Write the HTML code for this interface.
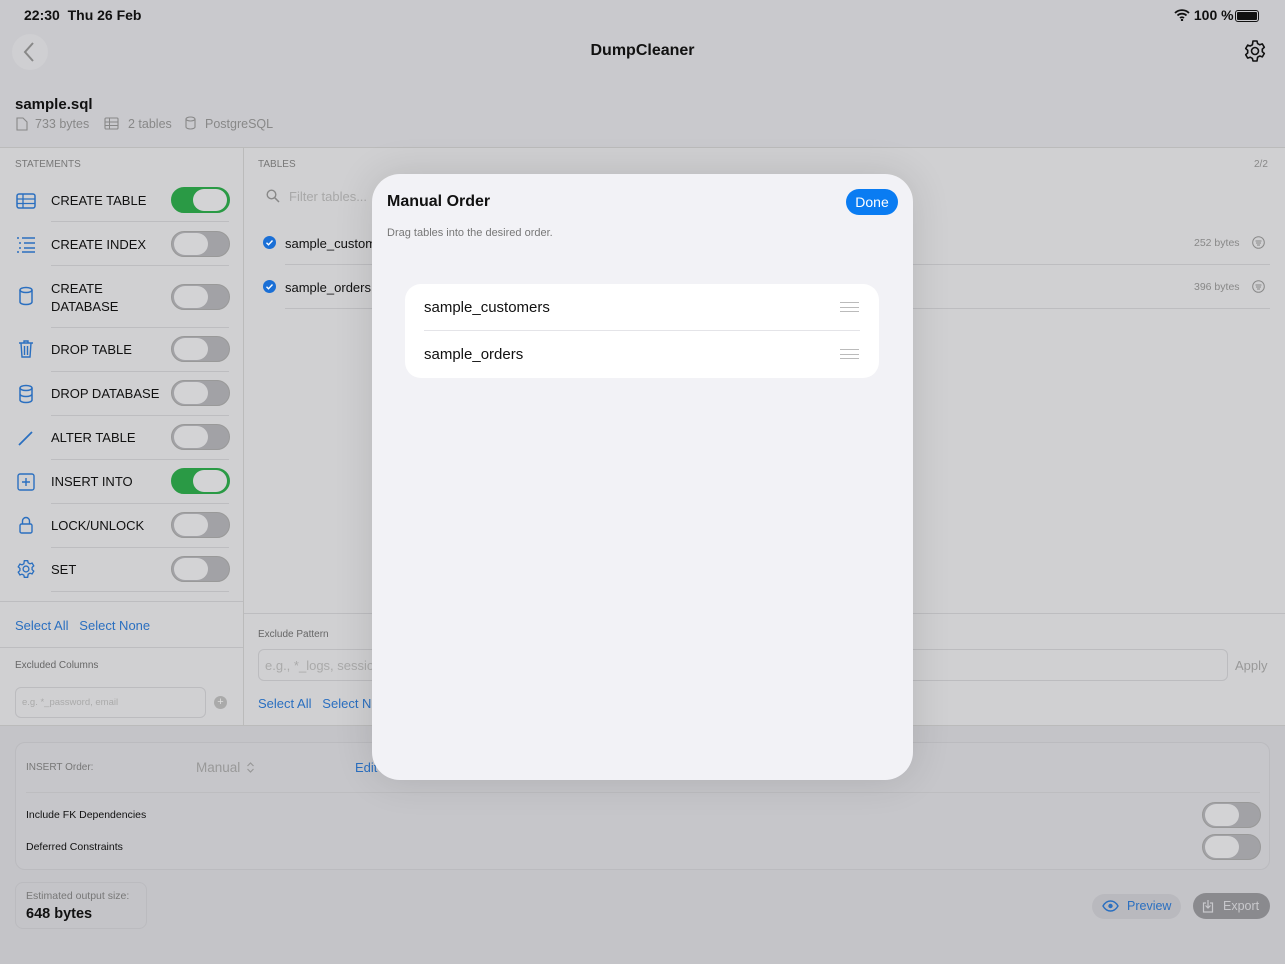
<!DOCTYPE html>
<html><head><meta charset="utf-8"><style>
*{box-sizing:border-box;margin:0;padding:0}
body{width:1285px;height:964px;overflow:hidden;background:#c4c4c8;font-family:"Liberation Sans",sans-serif;color:#111;position:relative}
.a{position:absolute}
.t{position:absolute;white-space:nowrap}
.blue{color:#2a6fc0}
.gray{color:#888}
.tog{position:absolute;width:59px;height:26px;border-radius:13px;background:#a2a2a6;border:1px solid #999}
.tog::after{content:"";position:absolute;left:2px;top:1px;width:34px;height:22px;border-radius:11px;background:#d3d3d5}
.tog.on{background:#2a9a45;border-color:#2a9a45}
.tog.on::after{left:21px}
.sep{position:absolute;height:1px;background:#bdbdc0}
.ic{position:absolute;left:16px;width:20px;height:20px}
.lbl{position:absolute;white-space:nowrap;left:51px;font-size:13px}
.chk{position:absolute;width:13px;height:13px}
</style></head><body>
<div class="a" style="left:0;top:0;width:1285px;height:147px;background:#c9c9cd"></div>
<div class="t" style="left:24px;top:7px;font-size:14px;font-weight:bold">22:30&nbsp; Thu 26 Feb</div>
<div class="t" style="left:1174px;top:7px;font-size:14px;font-weight:bold">
<svg width="16" height="12" viewBox="0 0 16 12" style="vertical-align:-1px"><path d="M1 4a10 10 0 0 1 14 0M3.5 6.5a6.5 6.5 0 0 1 9 0M6 9a3 3 0 0 1 4 0" stroke="#111" stroke-width="1.8" fill="none"/><circle cx="8" cy="11" r="1.2" fill="#111"/></svg> 100 %</div>
<div class="a" style="left:1235px;top:10px;width:24px;height:12px;border:1.5px solid #111;border-radius:3px;padding:1px"><div style="width:100%;height:100%;background:#111;border-radius:1px"></div></div>
<div class="a" style="left:12px;top:34px;width:36px;height:36px;border-radius:18px;background:#cfcfd2"></div>
<svg class="a" style="left:22px;top:41px" width="14" height="22"><path d="M11 2L3 11l8 9" stroke="#888" stroke-width="2" fill="none"/></svg>
<div class="t" style="left:0;width:1285px;text-align:center;top:42px;font-size:16px;font-weight:bold">DumpCleaner</div>
<svg class="a" style="left:1243px;top:39px" width="24" height="24" viewBox="0 0 24 24"><circle cx="12" cy="12" r="3.5" stroke="#111" stroke-width="1.6" fill="none"/><path d="M10 2h4l.6 2.6 2.2 1.2 2.5-.9 2 3.4-2 1.8v2.6l2 1.8-2 3.4-2.5-.9-2.2 1.2L14 22h-4l-.6-2.6-2.2-1.2-2.5.9-2-3.4 2-1.8V11.3l-2-1.8 2-3.4 2.5.9 2.2-1.2z" stroke="#111" stroke-width="1.6" fill="none" stroke-linejoin="round"/></svg>
<div class="t" style="left:15px;top:96px;font-size:15px;font-weight:bold">sample.sql</div>
<svg class="a" style="left:16px;top:117px" width="12" height="14" viewBox="0 0 12 14"><path d="M1 1h6l4 4v8H1z" stroke="#888" stroke-width="1.1" fill="none"/></svg>
<div class="t gray" style="left:35px;top:117px;font-size:12.5px">733 bytes</div>
<svg class="a" style="left:104px;top:117px" width="15" height="13" viewBox="0 0 15 13"><rect x="1" y="1" width="13" height="11" rx="1" stroke="#888" stroke-width="1.1" fill="none"/><path d="M1 5h13M1 8.5h13M5.5 1v11" stroke="#888" stroke-width="1"/></svg>
<div class="t gray" style="left:128px;top:117px;font-size:12.5px">2 tables</div>
<svg class="a" style="left:185px;top:116px" width="11" height="14" viewBox="0 0 11 14"><ellipse cx="5.5" cy="3" rx="4.5" ry="2" stroke="#888" stroke-width="1.1" fill="none"/><path d="M1 3v8c0 1.1 2 2 4.5 2s4.5-.9 4.5-2V3" stroke="#888" stroke-width="1.1" fill="none"/></svg>
<div class="t gray" style="left:205px;top:117px;font-size:12.5px">PostgreSQL</div>

<div class="a" style="left:0;top:147px;width:1285px;height:579px;background:#d0d0d2;border-top:1px solid #bbb;border-bottom:1px solid #bbb"></div>
<div class="a" style="left:243px;top:147px;width:1px;height:579px;background:#bbb"></div>
<div class="t" style="left:15px;top:159px;font-size:10px;color:#777">STATEMENTS</div>
<div class="t" style="left:258px;top:159px;font-size:10px;color:#777">TABLES</div>
<div class="t gray" style="left:1254px;top:159px;font-size:10px">2/2</div>

<svg class="ic" style="top:191px" viewBox="0 0 20 20"><rect x="1" y="3" width="18" height="14" rx="2" stroke="#2a6fc0" stroke-width="1.5" fill="none"/><path d="M1 8h18M1 12.5h18M7 3v14" stroke="#2a6fc0" stroke-width="1.3"/></svg>
<div class="lbl" style="top:193px">CREATE TABLE</div><div class="tog on" style="left:171px;top:187px"></div>
<div class="sep" style="left:51px;top:221px;width:178px"></div>
<svg class="ic" style="top:234px" viewBox="0 0 20 20"><path d="M6 4h13M8 9h11M8 14h11M6 18h13" stroke="#2a6fc0" stroke-width="1.4"/><path d="M1 4h2M3 9h2M3 14h2M1 18h2" stroke="#2a6fc0" stroke-width="1.4"/></svg>
<div class="lbl" style="top:237px">CREATE INDEX</div><div class="tog" style="left:171px;top:231px"></div>
<div class="sep" style="left:51px;top:265px;width:178px"></div>
<svg class="ic" style="top:286px" viewBox="0 0 20 20"><ellipse cx="10" cy="4" rx="6" ry="2.5" stroke="#2a6fc0" stroke-width="1.5" fill="none"/><path d="M4 4v12c0 1.4 2.7 2.5 6 2.5s6-1.1 6-2.5V4" stroke="#2a6fc0" stroke-width="1.5" fill="none"/></svg>
<div class="lbl" style="top:280px;line-height:18px">CREATE<br>DATABASE</div><div class="tog" style="left:171px;top:284px"></div>
<div class="sep" style="left:51px;top:327px;width:178px"></div>
<svg class="ic" style="top:339px" viewBox="0 0 20 20"><path d="M3 4h14M8 4V2h4v2M5 4l1 14h8l1-14M8.5 7v9M11.5 7v9" stroke="#2a6fc0" stroke-width="1.4" fill="none"/></svg>
<div class="lbl" style="top:342px">DROP TABLE</div><div class="tog" style="left:171px;top:336px"></div>
<div class="sep" style="left:51px;top:371px;width:178px"></div>
<svg class="ic" style="top:384px" viewBox="0 0 20 20"><ellipse cx="10" cy="4" rx="6" ry="2.5" stroke="#2a6fc0" stroke-width="1.5" fill="none"/><path d="M4 4v12c0 1.4 2.7 2.5 6 2.5s6-1.1 6-2.5V4M4 10c0 1.4 2.7 2.5 6 2.5s6-1.1 6-2.5" stroke="#2a6fc0" stroke-width="1.5" fill="none"/></svg>
<div class="lbl" style="top:386px">DROP DATABASE</div><div class="tog" style="left:171px;top:380px"></div>
<div class="sep" style="left:51px;top:415px;width:178px"></div>
<svg class="ic" style="top:428px" viewBox="0 0 20 20"><path d="M3 17L16 4" stroke="#2a6fc0" stroke-width="1.8"/></svg>
<div class="lbl" style="top:430px">ALTER TABLE</div><div class="tog" style="left:171px;top:424px"></div>
<div class="sep" style="left:51px;top:459px;width:178px"></div>
<svg class="ic" style="top:472px" viewBox="0 0 20 20"><rect x="2" y="2" width="16" height="16" rx="2" stroke="#2a6fc0" stroke-width="1.4" fill="none"/><path d="M10 6v8M6 10h8" stroke="#2a6fc0" stroke-width="1.4"/></svg>
<div class="lbl" style="top:474px">INSERT INTO</div><div class="tog on" style="left:171px;top:468px"></div>
<div class="sep" style="left:51px;top:503px;width:178px"></div>
<svg class="ic" style="top:515px" viewBox="0 0 20 20"><rect x="4" y="9" width="12" height="9" rx="1.5" stroke="#2a6fc0" stroke-width="1.4" fill="none"/><path d="M6.5 9V6a3.5 3.5 0 0 1 7 0v3" stroke="#2a6fc0" stroke-width="1.4" fill="none"/></svg>
<div class="lbl" style="top:518px">LOCK/UNLOCK</div><div class="tog" style="left:171px;top:512px"></div>
<div class="sep" style="left:51px;top:547px;width:178px"></div>
<svg class="ic" style="top:559px" viewBox="0 0 24 24"><circle cx="12" cy="12" r="3.5" stroke="#2a6fc0" stroke-width="1.6" fill="none"/><path d="M10 2h4l.6 2.6 2.2 1.2 2.5-.9 2 3.4-2 1.8v2.6l2 1.8-2 3.4-2.5-.9-2.2 1.2L14 22h-4l-.6-2.6-2.2-1.2-2.5.9-2-3.4 2-1.8V11.3l-2-1.8 2-3.4 2.5.9 2.2-1.2z" stroke="#2a6fc0" stroke-width="1.6" fill="none"/></svg>
<div class="lbl" style="top:562px">SET</div><div class="tog" style="left:171px;top:556px"></div>
<div class="sep" style="left:51px;top:591px;width:178px"></div>
<div class="sep" style="left:0;top:601px;width:243px"></div>
<div class="t blue" style="left:15px;top:618px;font-size:13px">Select All&nbsp;&nbsp; Select None</div>
<div class="sep" style="left:0;top:647px;width:243px"></div>
<div class="t" style="left:15px;top:660px;font-size:10px;color:#666">Excluded Columns</div>
<div class="a" style="left:15px;top:687px;width:191px;height:31px;border:1px solid #bcbcbf;border-radius:6px"></div>
<div class="t" style="left:22px;top:697px;font-size:9.5px;color:#aaa">e.g. *_password, email</div>
<div class="a" style="left:214px;top:696px;width:13px;height:13px;border-radius:7px;background:#aaa;color:#ddd;font-size:11px;line-height:13px;text-align:center">+</div>

<svg class="a" style="left:266px;top:189px" width="14" height="14" viewBox="0 0 14 14"><circle cx="5.5" cy="5.5" r="4.3" stroke="#888" stroke-width="1.4" fill="none"/><path d="M8.7 8.7L13 13" stroke="#888" stroke-width="1.5"/></svg>
<div class="t" style="left:289px;top:189px;font-size:13px;color:#a8a8a8">Filter tables...</div>
<svg class="chk" style="left:263px;top:236px" viewBox="0 0 13 13"><circle cx="6.5" cy="6.5" r="6.5" fill="#1a6fd6"/><path d="M3.5 6.8l2 2 4-4.3" stroke="#fff" stroke-width="1.4" fill="none"/></svg>
<div class="t" style="left:285px;top:236px;font-size:13px">sample_customers</div>
<div class="sep" style="left:285px;top:264px;width:985px"></div>
<svg class="chk" style="left:263px;top:280px" viewBox="0 0 13 13"><circle cx="6.5" cy="6.5" r="6.5" fill="#1a6fd6"/><path d="M3.5 6.8l2 2 4-4.3" stroke="#fff" stroke-width="1.4" fill="none"/></svg>
<div class="t" style="left:285px;top:280px;font-size:13px">sample_orders</div>
<div class="sep" style="left:285px;top:308px;width:985px"></div>
<div class="t gray" style="left:1194px;top:237px;font-size:10.5px">252 bytes</div>
<div class="t gray" style="left:1194px;top:281px;font-size:10.5px">396 bytes</div>
<svg class="a" style="left:1252px;top:236px" width="13" height="13" viewBox="0 0 13 13"><circle cx="6.5" cy="6.5" r="5.8" stroke="#888" stroke-width="1" fill="none"/><path d="M3.5 5h6M4 7h5M5 9h3" stroke="#888" stroke-width="1"/></svg>
<svg class="a" style="left:1252px;top:280px" width="13" height="13" viewBox="0 0 13 13"><circle cx="6.5" cy="6.5" r="5.8" stroke="#888" stroke-width="1" fill="none"/><path d="M3.5 5h6M4 7h5M5 9h3" stroke="#888" stroke-width="1"/></svg>
<div class="sep" style="left:244px;top:613px;width:1041px"></div>
<div class="t" style="left:258px;top:629px;font-size:10px;color:#666">Exclude Pattern</div>
<div class="a" style="left:258px;top:649px;width:970px;height:32px;border:1px solid #bcbcbf;border-radius:6px"></div>
<div class="t" style="left:265px;top:658px;font-size:13px;color:#aaa">e.g., *_logs, sessions</div>
<div class="t" style="left:1235px;top:658px;font-size:13px;color:#999">Apply</div>
<div class="t blue" style="left:258px;top:696px;font-size:13px">Select All&nbsp;&nbsp; Select None</div>

<div class="a" style="left:15px;top:742px;width:1255px;height:128px;border:1px solid #bbbbbf;border-radius:10px;background:#c6c6ca"></div>
<div class="t" style="left:26px;top:762px;font-size:10px;color:#777">INSERT Order:</div>
<div class="t" style="left:196px;top:760px;font-size:13.5px;color:#999">Manual</div>
<svg class="a" style="left:246px;top:761px" width="9" height="13" viewBox="0 0 9 13"><path d="M1.5 5L4.5 2 7.5 5M1.5 8l3 3 3-3" stroke="#999" stroke-width="1.2" fill="none"/></svg>
<div class="t blue" style="left:355px;top:760px;font-size:13px">Edit</div>
<div class="sep" style="left:26px;top:792px;width:1234px"></div>
<div class="t" style="left:26px;top:809px;font-size:10.5px">Include FK Dependencies</div>
<div class="t" style="left:26px;top:841px;font-size:10.5px">Deferred Constraints</div>
<div class="tog" style="left:1202px;top:802px"></div>
<div class="tog" style="left:1202px;top:834px"></div>
<div class="a" style="left:15px;top:882px;width:132px;height:47px;border:1px solid #bbbbbf;border-radius:8px"></div>
<div class="t" style="left:26px;top:890px;font-size:10.5px;color:#777">Estimated output size:</div>
<div class="t" style="left:26px;top:906px;font-size:14.5px;font-weight:bold">648 bytes</div>
<div class="a" style="left:1092px;top:894px;width:89px;height:25px;border-radius:13px;background:#b9b9be"></div>
<svg class="a" style="left:1102px;top:900px" width="17" height="12" viewBox="0 0 17 12"><path d="M1 6c2-3.5 4.5-5 7.5-5s5.5 1.5 7.5 5c-2 3.5-4.5 5-7.5 5S3 9.5 1 6z" stroke="#2a6fc0" stroke-width="1.4" fill="none"/><circle cx="8.5" cy="6" r="2.2" fill="#2a6fc0"/></svg>
<div class="t blue" style="left:1127px;top:899px;font-size:12.5px">Preview</div>
<div class="a" style="left:1193px;top:893px;width:77px;height:26px;border-radius:13px;background:#8a8a8e"></div>
<svg class="a" style="left:1202px;top:899px" width="12" height="14" viewBox="0 0 12 14"><path d="M4 4H1.5v9h9V4H8M6 1v8M3.5 6.5L6 9l2.5-2.5" stroke="#c8c8cc" stroke-width="1.2" fill="none"/></svg>
<div class="t" style="left:1223px;top:899px;font-size:12.5px;color:#c8c8cc">Export</div>

<div class="a" style="left:372px;top:174px;width:541px;height:606px;border-radius:28px;background:#f2f2f6;box-shadow:0 0 40px rgba(0,0,0,.12)"></div>
<div class="t" style="left:387px;top:193px;font-size:16px;font-weight:bold">Manual Order</div>
<div class="a" style="left:846px;top:189px;width:52px;height:26px;border-radius:13px;background:#0a7cf2;color:#fff;font-size:14px;text-align:center;line-height:26px">Done</div>
<div class="t" style="left:387px;top:227px;font-size:11px;color:#777">Drag tables into the desired order.</div>
<div class="a" style="left:405px;top:284px;width:474px;height:94px;border-radius:16px;background:#fff"></div>
<div class="t" style="left:424px;top:299px;font-size:15px">sample_customers</div>
<div class="a" style="left:424px;top:330px;width:436px;height:1px;background:#e4e4e8"></div>
<div class="t" style="left:424px;top:346px;font-size:15px">sample_orders</div>
<div class="a" style="left:840px;top:302px;width:19px;height:10px;border-top:1px solid #bbb;border-bottom:1px solid #bbb"><div style="margin-top:4px;height:1px;background:#bbb"></div></div>
<div class="a" style="left:840px;top:349px;width:19px;height:10px;border-top:1px solid #bbb;border-bottom:1px solid #bbb"><div style="margin-top:4px;height:1px;background:#bbb"></div></div>
</body></html>
